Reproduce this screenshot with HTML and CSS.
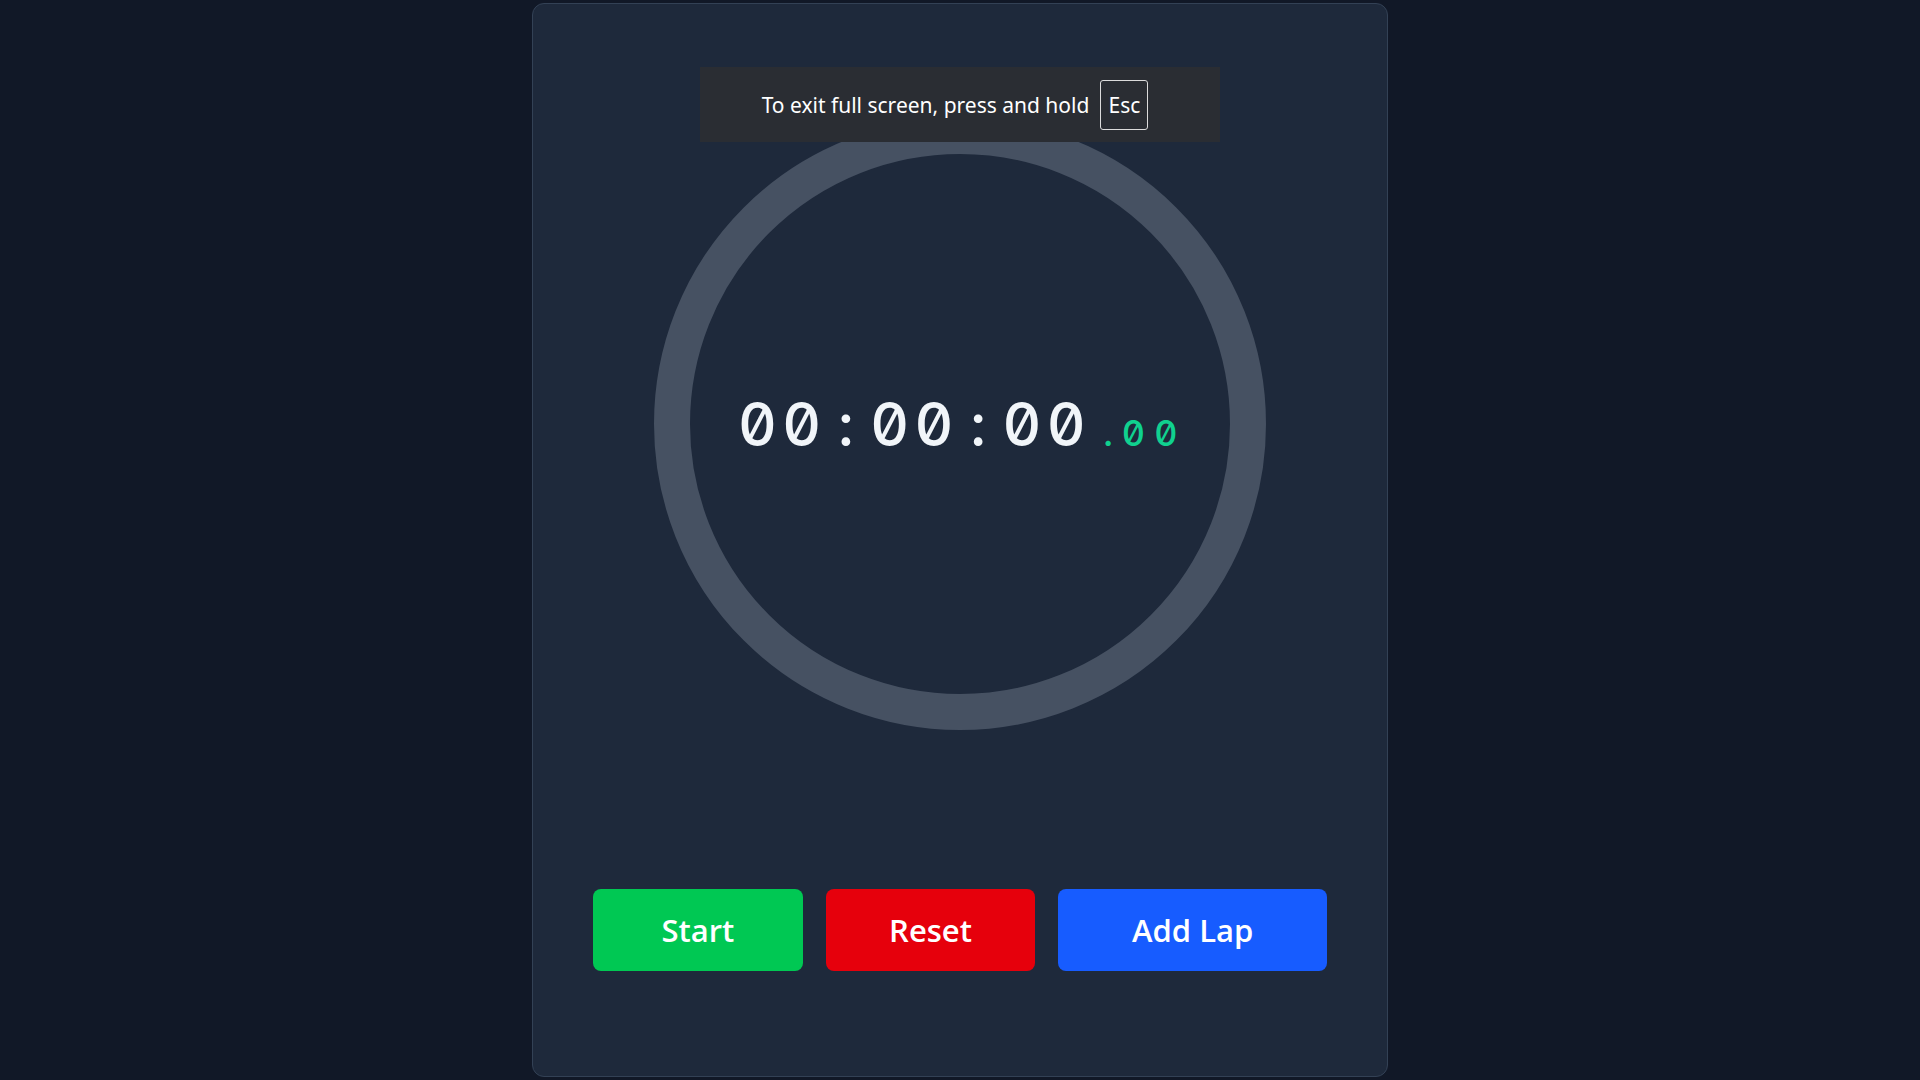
FILE: index.html
```html
<!DOCTYPE html>
<html lang="en">
<head>
<meta charset="utf-8">
<title>Stopwatch</title>
<link rel="stylesheet" href="styles.css">
</head>
<body>
<main class="card">
  <div class="dial">
    <div class="time">
      <span class="main"><span class="ch">0</span><span class="ch">0</span><span class="ch">:</span><span class="ch">0</span><span class="ch">0</span><span class="ch">:</span><span class="ch">0</span><span class="ch">0</span></span><span class="ms">.00</span>
    </div>
  </div>
  <div class="controls">
    <button class="btn btn-start">Start</button>
    <button class="btn btn-reset">Reset</button>
    <button class="btn btn-lap">Add Lap</button>
  </div>
</main>
<div class="fs-notice">
  <span class="fs-text">To exit full screen, press and hold</span>
  <span class="fs-key">Esc</span>
</div>
</body>
</html>
```

FILE: styles.css
```css
html, body {
  margin: 0;
  padding: 0;
}
body {
  background: #111827;
  min-height: 1080px;
  padding-top: 3px;
  box-sizing: border-box;
  font-family: "Open Sans", "Noto Sans", sans-serif;
  overflow: hidden;
}
.card {
  box-sizing: border-box;
  width: 856px;
  height: 1074px;
  margin: 0 auto;
  background: #1e293b;
  border: 1px solid #334155;
  border-radius: 12px;
  padding: 0 60px;
  display: flex;
  flex-direction: column;
  align-items: center;
}
.dial {
  box-sizing: border-box;
  width: 612px;
  height: 612px;
  margin-top: 114px;
  border: 36px solid #465162;
  border-radius: 50%;
  display: flex;
  align-items: center;
  justify-content: center;
}
.time {
  display: flex;
  align-items: baseline;
  font-family: "Inter", "DejaVu Sans", sans-serif;
  font-feature-settings: "zero" 1, "tnum" 1;
  margin-top: 0;
  margin-left: 2px;
}
.main {
  display: flex;
  color: #f1f5f9;
  font-size: 60px;
  font-weight: 500;
}
.ch {
  display: inline-block;
  width: 44.1px;
  text-align: center;
}
.ms {
  color: #10d18f;
  font-size: 36px;
  font-weight: 500;
  letter-spacing: 9px;
  margin-left: 15px;
}
.controls {
  margin-top: 159px;
  display: flex;
  gap: 23px;
  align-self: stretch;
}
.btn {
  height: 82px;
  border: none;
  border-radius: 8px;
  color: #ffffff;
  font-family: "Open Sans", "Noto Sans", sans-serif;
  font-weight: 600;
  font-size: 31px;
  padding: 0;
  cursor: pointer;
}
.btn-start {
  width: 210px;
  background: #00c853;
}
.btn-reset {
  width: 210px;
  background: #e6000c;
}
.btn-lap {
  width: 269px;
  background: #175cff;
}
.fs-notice {
  position: absolute;
  top: 67px;
  left: 700px;
  width: 520px;
  height: 75px;
  background: #2a2d33;
  display: flex;
  align-items: center;
  justify-content: center;
  gap: 11px;
  color: #ffffff;
  box-sizing: border-box;
  padding-right: 10px;
}
.fs-text {
  font-family: "Noto Sans", sans-serif;
  font-size: 21px;
}
.fs-key {
  box-sizing: border-box;
  width: 48px;
  height: 50px;
  border: 1.5px solid #dcdcdc;
  border-radius: 3px;
  display: flex;
  align-items: center;
  justify-content: center;
  font-family: "Noto Sans", sans-serif;
  font-size: 21px;
}
```
